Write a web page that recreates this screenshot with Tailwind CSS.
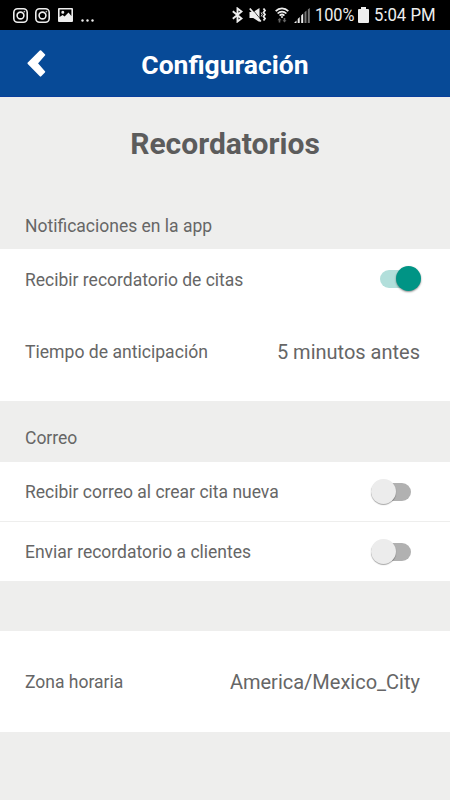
<!DOCTYPE html>
<html lang="es">
<head>
    <meta charset="UTF-8">
    <meta name="viewport" content="width=device-width, initial-scale=1.0">
    <title>Configuración</title>
    <script src="https://cdn.jsdelivr.net/npm/@tailwindcss/browser@4"></script>
</head>
<body class="bg-[#eeeeed] h-screen flex flex-col overflow-hidden font-['Roboto',sans-serif] text-[#666666]">
    <!-- Barra de estado -->
    <div class="h-[30px] shrink-0 bg-black text-[#eeeeee] flex items-center pl-[13px] pr-[14px]">
        <svg class="w-[15px] h-[15px] mr-[7px]" viewBox="0 0 15 15" fill="none" stroke="currentColor" stroke-width="1.6">
            <rect x=".8" y=".8" width="13.4" height="13.4" rx="3.8"/>
            <circle cx="7.5" cy="7.5" r="3.4"/>
            <circle cx="11.3" cy="3.7" r=".4" stroke-width="1"/>
        </svg>
        <svg class="w-[15px] h-[15px] mr-[8px]" viewBox="0 0 15 15" fill="none" stroke="currentColor" stroke-width="1.6">
            <rect x=".8" y=".8" width="13.4" height="13.4" rx="3.8"/>
            <circle cx="7.5" cy="7.5" r="3.4"/>
            <circle cx="11.3" cy="3.7" r=".4" stroke-width="1"/>
        </svg>
        <svg class="w-[15px] h-[14px]" viewBox="0 0 15 14">
            <path fill="currentColor" fill-rule="evenodd" d="M1 0h13a1 1 0 0 1 1 1v12a1 1 0 0 1-1 1H1a1 1 0 0 1-1-1V1a1 1 0 0 1 1-1zM1.6 1.6V9L4.6 7l2 1.6L10.5 4.5 13.4 8V1.6zM4.8 2.8a1.5 1.5 0 1 1 0 3 1.5 1.5 0 0 1 0-3z"/>
        </svg>
        <svg class="w-[14px] h-[3px] ml-[8px] mt-[11px]" viewBox="0 0 14 3" fill="currentColor">
            <circle cx="1.5" cy="1.5" r="1.2"/>
            <circle cx="6.5" cy="1.5" r="1.2"/>
            <circle cx="11.5" cy="1.5" r="1.2"/>
        </svg>

        <div class="ml-auto flex items-center">
            <!-- Bluetooth -->
            <svg class="w-[11px] h-[16px] mr-[6px]" viewBox="0 0 11 16" fill="none" stroke="currentColor" stroke-width="1.9">
                <path d="M.8 4.2 9.5 11.5 5.5 14.5V1.5L9.5 4.5.8 11.8"/>
            </svg>
            <!-- Silencio / vibración -->
            <svg class="w-[18px] h-[16px] mr-[8px]" viewBox="0 0 18 16" fill="none" stroke="currentColor">
                <path fill="currentColor" stroke="none" d="M.5 5h3.7L10.5 1v14l-6.3-4H.5z"/>
                <path stroke="#000000" stroke-width=".8" d="M2.4 1l9.5 11.8"/>
                <path stroke-width="1.8" d="M.8 1.5 11.8 14.5"/>
                <path stroke-width="1.8" d="M14.5 1.5l1.5 2-1.5 2 1.5 2-1.5 2 1.5 2-1.5 2"/>
                <path stroke-width="1" d="M12.2 5.5l1 2-1 2"/>
            </svg>
            <!-- Wifi -->
            <svg class="w-[14px] h-[16px] mr-[5px]" viewBox="0 0 14 16" fill="none" stroke="currentColor" stroke-width="1.7">
                <path d="M.7 4.2C4.2.4 9.8.4 13.3 4.2M2.6 6.5c2.5-2.4 6.3-2.4 8.8 0M4.6 8.6c1.3-1.2 3.5-1.2 4.8 0"/>
                <circle cx="7" cy="10" r="1" fill="currentColor" stroke="none"/>
                <path fill="#666666" stroke="none" d="M4.5 11 6.5 13.2H5.3V15.5H3.7V13.2H2.5zM9.5 15.5l-2-2.3h1.2V11h1.6v2.2h1.2z"/>
            </svg>
            <!-- Señal -->
            <svg class="w-[16px] h-[15px] mr-[5px]" viewBox="0 0 16 15">
                <path fill="currentColor" d="M0 15l2.5-2.5V15zM3.7 11l2-2v6h-2zM7.2 7.5l2-2V15h-2z"/>
                <path fill="#777777" d="M10.5 4.3l2-1.7V15h-2zM13.8 1.5l2-1.5v15h-2z"/>
            </svg>
            <span class="w-[40px] text-[19px] leading-[30px] whitespace-nowrap"><span class="inline-block origin-left scale-x-[.86]">100%</span></span>
            <svg class="w-[11px] h-[16px] ml-[3px] mr-[5px]" viewBox="0 0 11 16">
                <path fill="currentColor" d="M3 0h5v2h2a1 1 0 0 1 1 1v12a1 1 0 0 1-1 1H1a1 1 0 0 1-1-1V3a1 1 0 0 1 1-1h2z"/>
            </svg>
            <span class="w-[62px] text-[19px] leading-[30px] whitespace-nowrap"><span class="inline-block origin-left scale-x-[.88]">5:04 PM</span></span>
        </div>
    </div>

    <!-- Encabezado -->
    <header class="relative h-[67px] shrink-0 bg-[#074a97] border-b border-[#0a3f9c] flex items-center justify-center">
        <svg class="absolute left-[27px] top-[20px] w-[19px] h-[28px]" viewBox="0 0 19 28">
            <path fill="#ffffff" stroke="#ffffff" stroke-width="2" stroke-linejoin="round" d="M13.5 1.2 17.2 4.9 9.8 13.3 17.2 21.8 13.5 25.6 1.5 13.3z"/>
        </svg>
        <h1 class="text-[26.5px] font-bold text-white leading-none mt-[4px]">Configuración</h1>
    </header>

    <h2 class="h-[94px] pb-[2px] shrink-0 flex items-center justify-center text-[30px] font-bold text-[#5c5c5c]">Recordatorios</h2>

    <!-- Notificaciones -->
    <h3 class="h-[58px] shrink-0 px-[25px] pt-[12px] flex items-center text-[17.5px]">Notificaciones en la app</h3>
    <div class="h-[152px] shrink-0 bg-white pl-[25px] pr-[30px]">
        <div class="h-[60px] flex items-center justify-between text-[17.5px]">
            <span class="pt-[2px]">Recibir recordatorio de citas</span>
            <div class="relative w-[40px] h-[18px] rounded-full bg-[#b2dfdb]">
                <div class="absolute -right-[1px] -top-[4px] size-[25px] rounded-full bg-[#009485] shadow-[0_1px_2px_rgba(0,0,0,0.45)]"></div>
            </div>
        </div>
        <div class="h-[86px] flex items-center justify-between text-[17.6px]">
            <span>Tiempo de anticipación</span>
            <span class="text-[20px] pb-[1px]">5 minutos antes</span>
        </div>
    </div>

    <!-- Correo -->
    <h3 class="h-[61px] shrink-0 px-[25px] pt-[14px] flex items-center text-[17.5px]">Correo</h3>
    <div class="h-[119px] shrink-0 bg-white text-[17.5px]">
        <div class="h-[60px] pl-[25px] pr-[39px] border-b border-[#eeeeed] flex items-center justify-between">
            <span class="pt-[2px]">Recibir correo al crear cita nueva</span>
            <div class="relative w-[40px] h-[18px] rounded-full bg-[#b1b1b1]">
                <div class="absolute left-0 -top-[4px] size-[25px] rounded-full bg-[#ececec] shadow-[0_1px_1px_rgba(0,0,0,0.35)]"></div>
            </div>
        </div>
        <div class="h-[59px] pl-[25px] pr-[39px] flex items-center justify-between">
            <span class="pt-[1px]">Enviar recordatorio a clientes</span>
            <div class="relative w-[40px] h-[18px] rounded-full bg-[#b1b1b1]">
                <div class="absolute left-0 -top-[4px] size-[25px] rounded-full bg-[#ececec] shadow-[0_1px_1px_rgba(0,0,0,0.35)]"></div>
            </div>
        </div>
    </div>

    <!-- Zona horaria -->
    <div class="mt-[50px] h-[101px] shrink-0 bg-white pl-[25px] pr-[30px] flex items-center justify-between text-[17.5px]">
        <span class="pt-[2px]">Zona horaria</span>
        <span class="text-[20px]">America/Mexico_City</span>
    </div>
</body>
</html>
